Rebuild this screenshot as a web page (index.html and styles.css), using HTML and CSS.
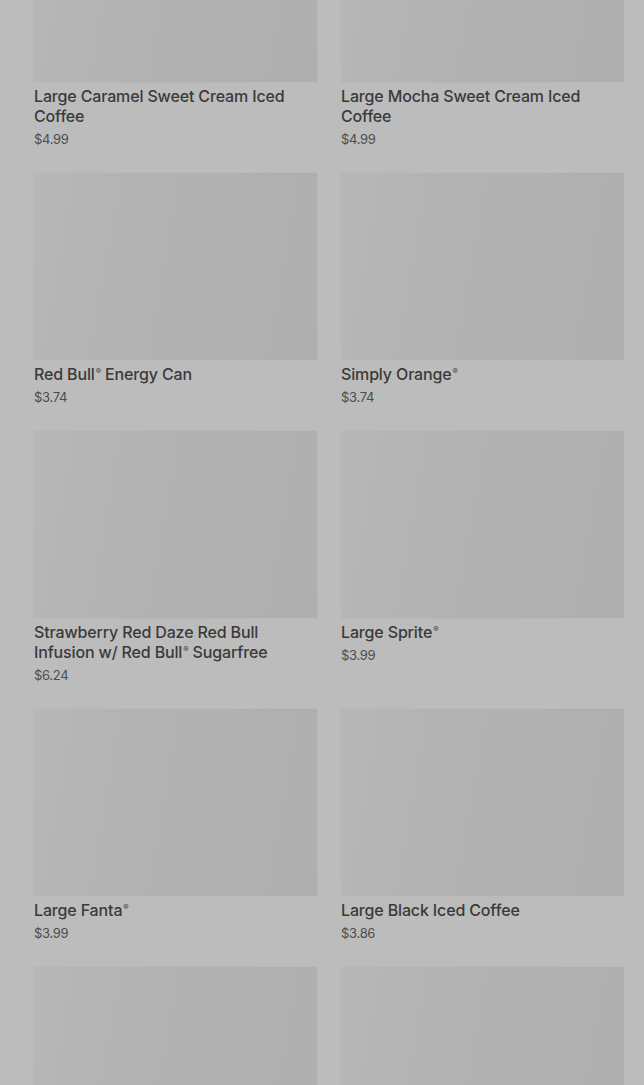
FILE: index.html
```html
<!DOCTYPE html>
<html lang="en">
<head>
  <meta charset="UTF-8">
  <meta name="viewport" content="width=device-width, initial-scale=1.0">
  <title>Drinks</title>
  <link rel="stylesheet" href="styles.css">
</head>
<body>
  <div class="menu">
    <div class="grid">
      <div class="item">
        <div class="thumb"></div>
        <div class="name">Large Caramel Sweet Cream Iced Coffee</div>
        <div class="price">$4.99</div>
      </div>
      <div class="item">
        <div class="thumb"></div>
        <div class="name">Large Mocha Sweet Cream Iced Coffee</div>
        <div class="price">$4.99</div>
      </div>

      <div class="item">
        <div class="thumb"></div>
        <div class="name">Red Bull<sup>®</sup> Energy Can</div>
        <div class="price">$3.74</div>
      </div>
      <div class="item">
        <div class="thumb"></div>
        <div class="name">Simply Orange<sup>®</sup></div>
        <div class="price">$3.74</div>
      </div>

      <div class="item">
        <div class="thumb"></div>
        <div class="name">Strawberry Red Daze Red Bull Infusion w/ Red Bull<sup>®</sup> Sugarfree</div>
        <div class="price">$6.24</div>
      </div>
      <div class="item">
        <div class="thumb"></div>
        <div class="name">Large Sprite<sup>®</sup></div>
        <div class="price">$3.99</div>
      </div>

      <div class="item">
        <div class="thumb"></div>
        <div class="name">Large Fanta<sup>®</sup></div>
        <div class="price">$3.99</div>
      </div>
      <div class="item">
        <div class="thumb"></div>
        <div class="name">Large Black Iced Coffee</div>
        <div class="price">$3.86</div>
      </div>

      <div class="item">
        <div class="thumb"></div>
        <div class="name">Large Iced Latte</div>
        <div class="price">$4.49</div>
      </div>
      <div class="item">
        <div class="thumb"></div>
        <div class="name">Large Iced Tea</div>
        <div class="price">$3.49</div>
      </div>
    </div>
  </div>
</body>
</html>
```

FILE: styles.css
```css
body {
  margin: 0;
  background-color: #bcbcbc;
  font-family: Inter, Roboto, 'Liberation Sans', sans-serif;
  color: #3b3b3b;
  overflow: hidden;
}

.menu {
  padding: 0 20px 0 34px;
}

/* page is scrolled part way down the list */
.grid {
  margin-top: -105px;
  display: grid;
  grid-template-columns: 283px 283px;
  column-gap: 24px;
  row-gap: 25px;
  align-items: start;
}

.thumb {
  height: 187px;
  background: linear-gradient(100deg, #b7b7b7 0%, #b2b2b2 40%, #afafaf 100%);
  box-shadow: 0 0 0 1px #b9b9b9;
}

.name {
  margin-top: 4px;
  font-size: 16px;
  line-height: 20px;
  font-weight: 500;
  letter-spacing: -0.15px;
  color: #3a3a3a;
}

.name sup {
  font-size: 8px;
  line-height: 0;
  vertical-align: baseline;
  position: relative;
  top: -6px;
  margin-left: 1px;
}

.price {
  margin-top: 4px;
  font-size: 13px;
  line-height: 18px;
  letter-spacing: -0.3px;
  color: #4c4c4c;
}
```
